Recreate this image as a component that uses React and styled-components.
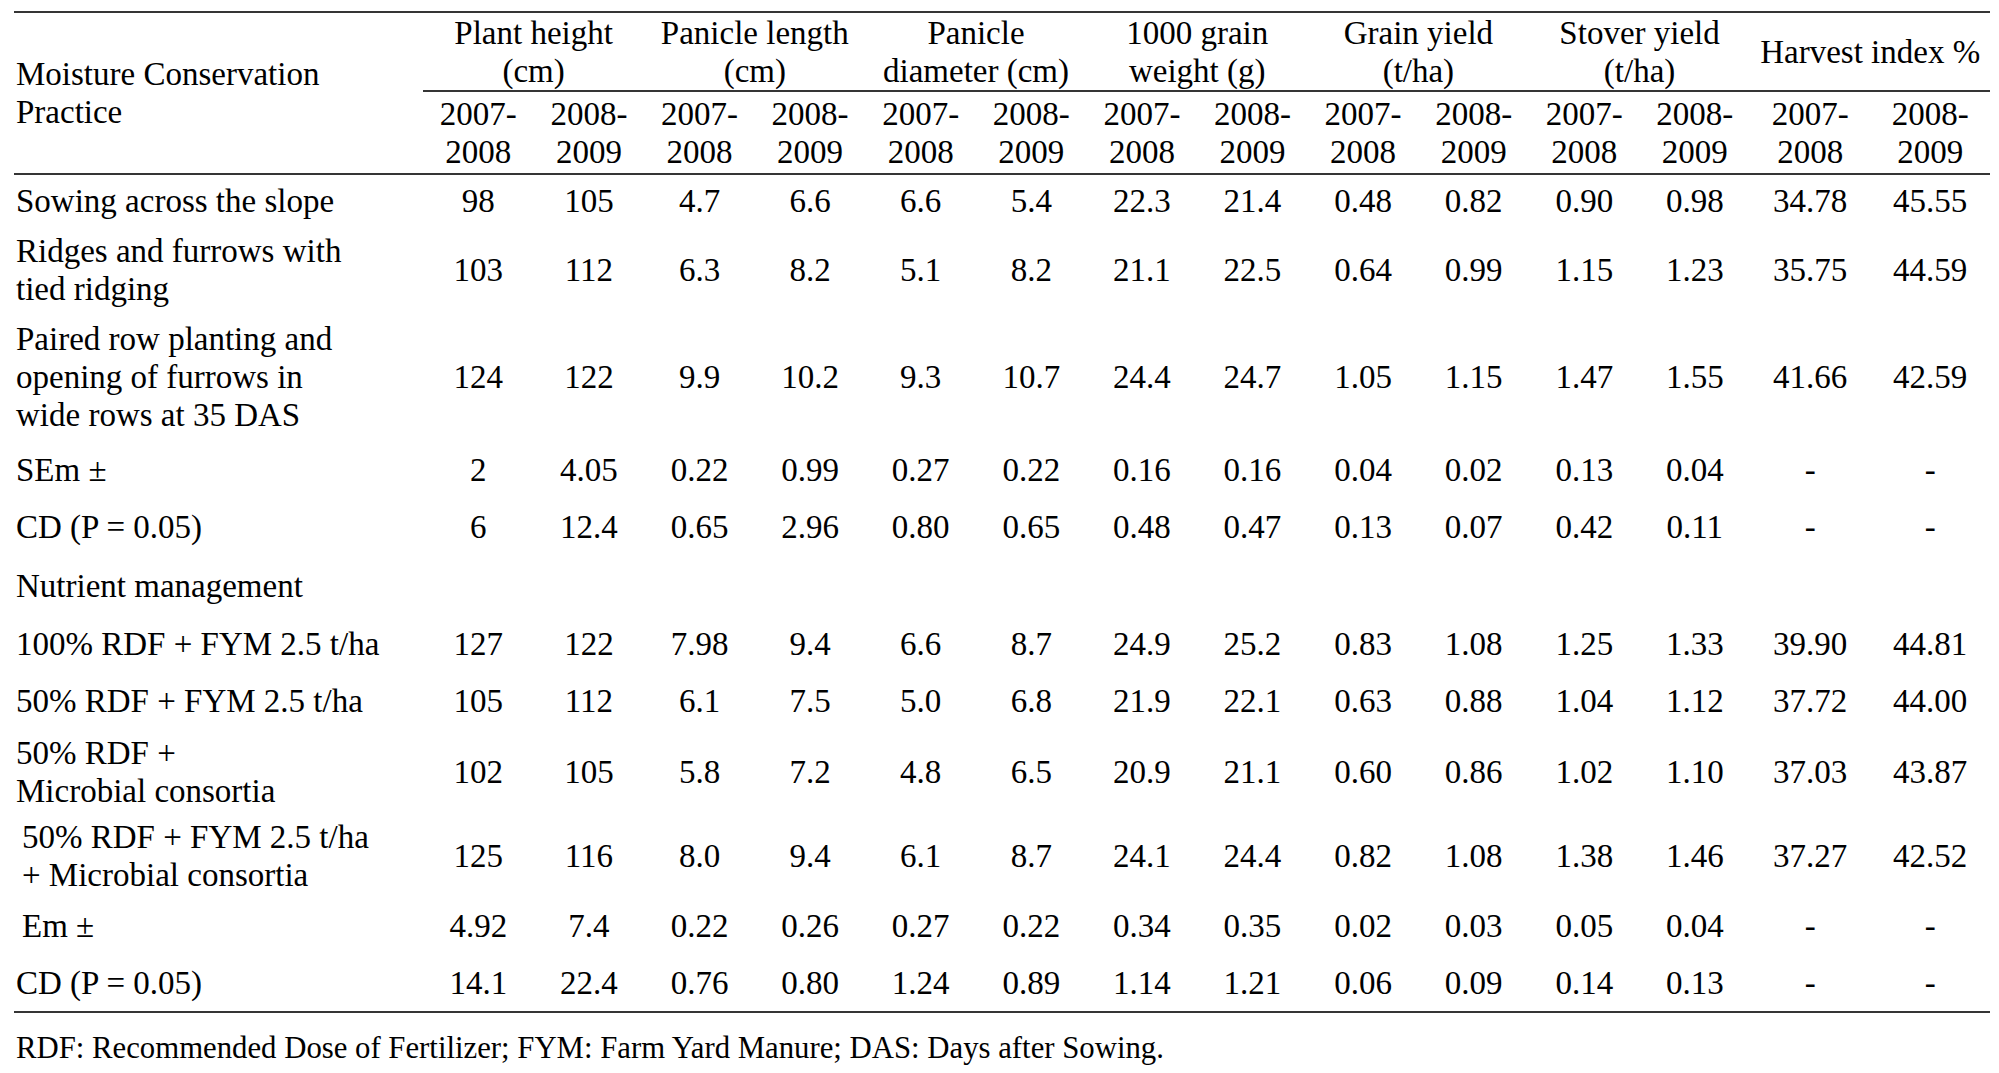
import React from "react";
import styled, { createGlobalStyle } from "styled-components";

const Global = createGlobalStyle`
  html, body { margin: 0; padding: 0; background: #ffffff; }
  body { font-family: "Liberation Serif", "Times New Roman", serif; color: #000; }
`;

const Page = styled.div`
  padding: 11px 9px 0 14px;
  font-family: "Liberation Serif", "Times New Roman", serif;
  color: #000;
`;

const Table = styled.table`
  width: 1976px;
  table-layout: fixed;
  border-collapse: collapse;
  border-top: 2px solid #353535;
  border-bottom: 2px solid #353535;
  font-size: 33px;
  line-height: 38px;
`;

const Col = styled.col`
  width: ${(p) => p.$w}px;
`;

const LabelHead = styled.th`
  font-weight: normal;
  text-align: left;
  vertical-align: middle;
  padding: 0 0 0 2px;
  white-space: nowrap;
  border-bottom: 2px solid #353535;
`;

const GroupHead = styled.th`
  font-weight: normal;
  text-align: center;
  vertical-align: middle;
  padding: 0;
  height: 77px;
  white-space: nowrap;
  border-bottom: 2px solid #353535;
`;

const YearHead = styled.th`
  font-weight: normal;
  text-align: center;
  vertical-align: middle;
  padding: 0;
  height: 81px;
  border-bottom: 2px solid #353535;
`;

const Row = styled.tr`
  height: ${(p) => p.$h}px;
`;

const LabelCell = styled.td`
  text-align: left;
  vertical-align: middle;
  padding: 0 0 0 ${(p) => (p.$indent ? 8 : 2)}px;
  white-space: nowrap;
`;

const ValueCell = styled.td`
  text-align: center;
  vertical-align: middle;
  padding: 0;
  white-space: nowrap;
`;

const Footnote = styled.p`
  margin: 16px 0 0 2px;
  font-size: 30.75px;
  line-height: 38px;
`;

const groups = [
  ["Plant height", "(cm)"],
  ["Panicle length", "(cm)"],
  ["Panicle", "diameter (cm)"],
  ["1000 grain", "weight (g)"],
  ["Grain yield", "(t/ha)"],
  ["Stover yield", "(t/ha)"],
  ["Harvest index %"],
];

const rows = [
  { h: 53, label: ["Sowing across the slope"], v: ["98", "105", "4.7", "6.6", "6.6", "5.4", "22.3", "21.4", "0.48", "0.82", "0.90", "0.98", "34.78", "45.55"] },
  { h: 86, label: ["Ridges and furrows with", "tied ridging"], v: ["103", "112", "6.3", "8.2", "5.1", "8.2", "21.1", "22.5", "0.64", "0.99", "1.15", "1.23", "35.75", "44.59"] },
  { h: 128, label: ["Paired row planting and", "opening of furrows in", "wide rows at 35 DAS"], v: ["124", "122", "9.9", "10.2", "9.3", "10.7", "24.4", "24.7", "1.05", "1.15", "1.47", "1.55", "41.66", "42.59"] },
  { h: 57, label: ["SEm ±"], v: ["2", "4.05", "0.22", "0.99", "0.27", "0.22", "0.16", "0.16", "0.04", "0.02", "0.13", "0.04", "-", "-"] },
  { h: 58, label: ["CD (P = 0.05)"], v: ["6", "12.4", "0.65", "2.96", "0.80", "0.65", "0.48", "0.47", "0.13", "0.07", "0.42", "0.11", "-", "-"] },
  { h: 59, label: ["Nutrient management"], v: [] },
  { h: 58, label: ["100% RDF + FYM 2.5 t/ha"], v: ["127", "122", "7.98", "9.4", "6.6", "8.7", "24.9", "25.2", "0.83", "1.08", "1.25", "1.33", "39.90", "44.81"] },
  { h: 56, label: ["50% RDF + FYM 2.5 t/ha"], v: ["105", "112", "6.1", "7.5", "5.0", "6.8", "21.9", "22.1", "0.63", "0.88", "1.04", "1.12", "37.72", "44.00"] },
  { h: 85, label: ["50% RDF +", "Microbial consortia"], v: ["102", "105", "5.8", "7.2", "4.8", "6.5", "20.9", "21.1", "0.60", "0.86", "1.02", "1.10", "37.03", "43.87"] },
  { h: 83, indent: true, label: ["50% RDF + FYM 2.5 t/ha", "+ Microbial consortia"], v: ["125", "116", "8.0", "9.4", "6.1", "8.7", "24.1", "24.4", "0.82", "1.08", "1.38", "1.46", "37.27", "42.52"] },
  { h: 58, indent: true, label: ["Em ±"], v: ["4.92", "7.4", "0.22", "0.26", "0.27", "0.22", "0.34", "0.35", "0.02", "0.03", "0.05", "0.04", "-", "-"] },
  { h: 57, label: ["CD (P = 0.05)"], v: ["14.1", "22.4", "0.76", "0.80", "1.24", "0.89", "1.14", "1.21", "0.06", "0.09", "0.14", "0.13", "-", "-"] },
];

const widths = [409, ...Array(12).fill(110.6), 120, 120];

const Lines = ({ lines }) =>
  lines.map((l, i) => (
    <React.Fragment key={i}>
      {i > 0 && <br />}
      {l}
    </React.Fragment>
  ));

export default function App() {
  return (
    <Page>
      <Global />
      <Table>
        <colgroup>
          {widths.map((w, i) => (
            <Col key={i} $w={w} />
          ))}
        </colgroup>
        <thead>
          <tr>
            <LabelHead rowSpan={2}>
              Moisture Conservation
              <br />
              Practice
            </LabelHead>
            {groups.map((g, i) => (
              <GroupHead key={i} colSpan={2}>
                <Lines lines={g} />
              </GroupHead>
            ))}
          </tr>
          <tr>
            {groups.flatMap((g, i) => [
              <YearHead key={`a${i}`}>
                2007-
                <br />
                2008
              </YearHead>,
              <YearHead key={`b${i}`}>
                2008-
                <br />
                2009
              </YearHead>,
            ])}
          </tr>
        </thead>
        <tbody>
          {rows.map((r, i) => (
            <Row key={i} $h={r.h}>
              <LabelCell $indent={r.indent}>
                <Lines lines={r.label} />
              </LabelCell>
              {Array.from({ length: 14 }).map((_, j) => (
                <ValueCell key={j}>{r.v[j] || ""}</ValueCell>
              ))}
            </Row>
          ))}
        </tbody>
      </Table>
      <Footnote>
        RDF: Recommended Dose of Fertilizer; FYM: Farm Yard Manure; DAS: Days after Sowing.
      </Footnote>
    </Page>
  );
}
